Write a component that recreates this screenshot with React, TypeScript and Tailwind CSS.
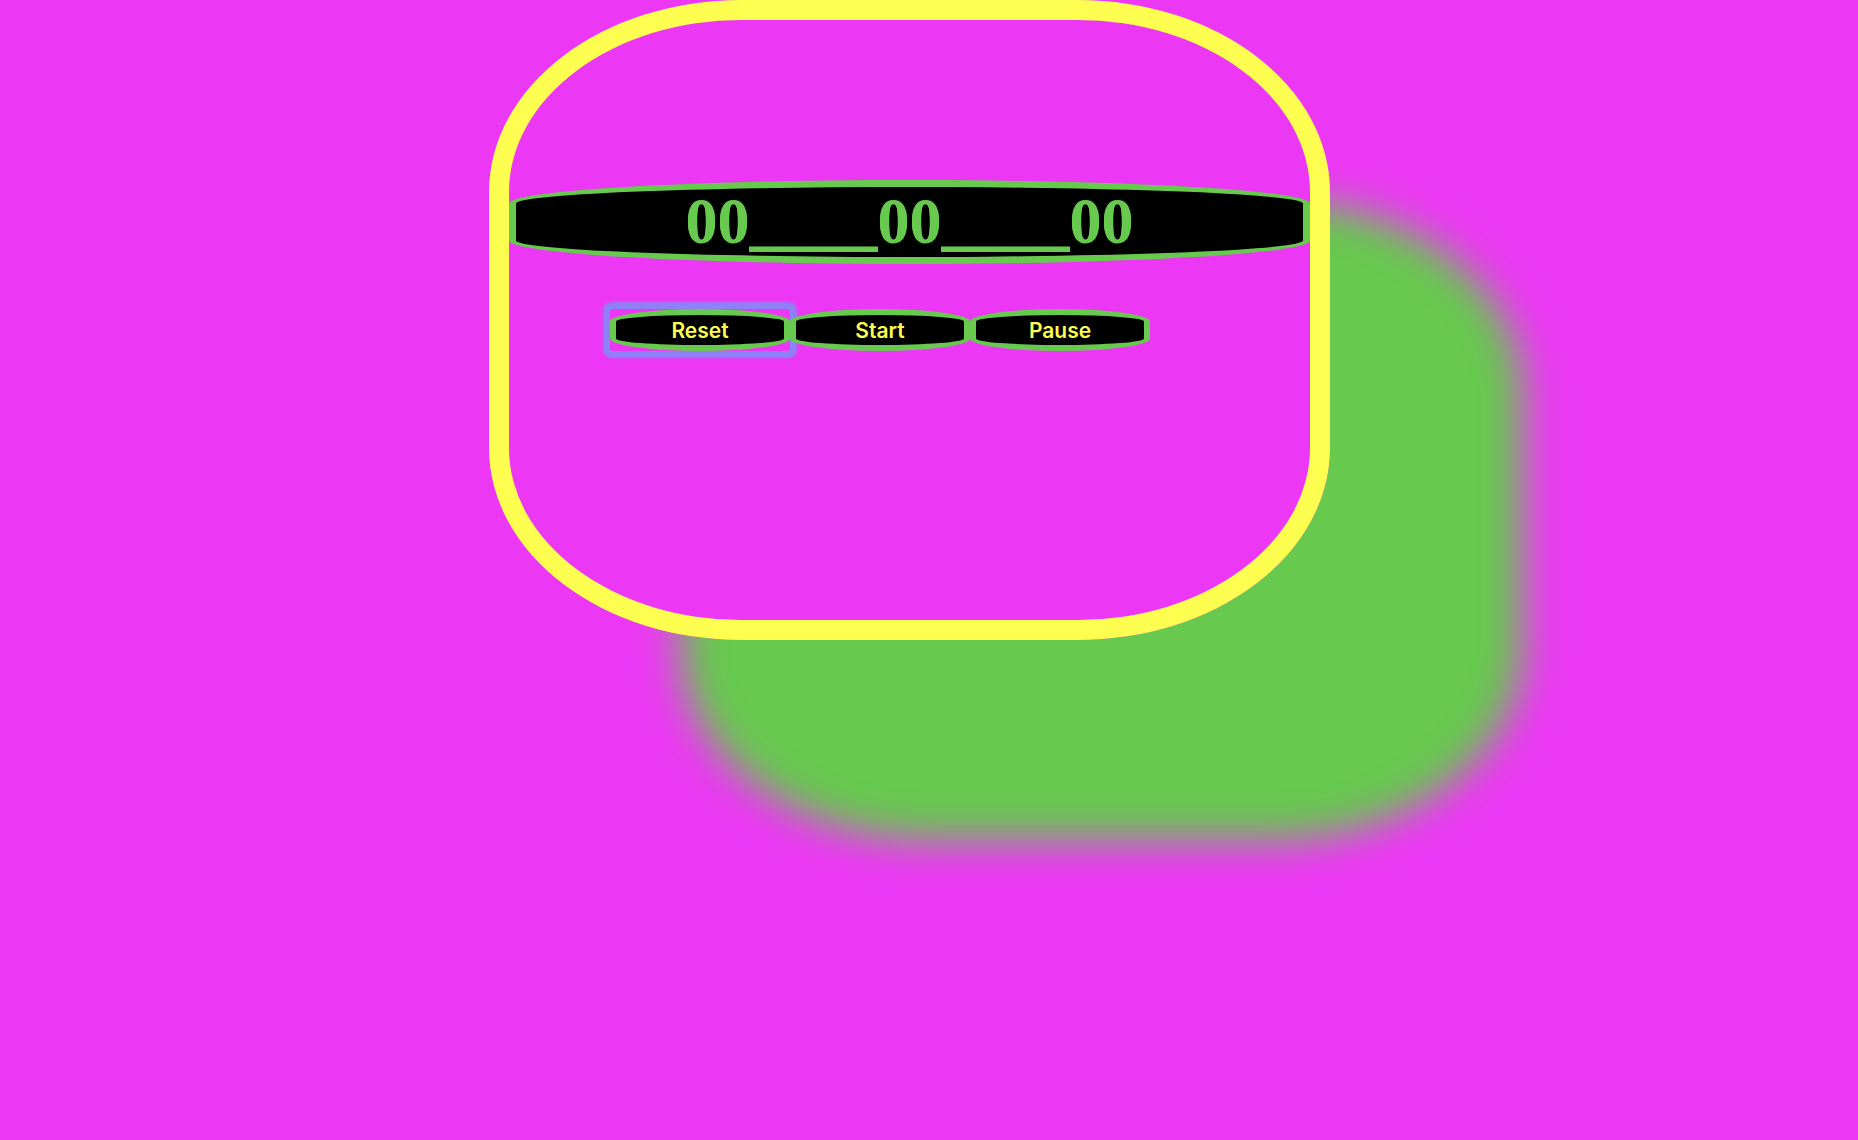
export default function App() {
  const buttons = ["Reset", "Start", "Pause"];

  return (
    <div className="min-h-screen w-full bg-[#ec38f4] overflow-hidden">
      <div className="ml-[489px] w-[841px] h-[640px] border-[20px] border-[#fefe51] rounded-[30%] shadow-[192px_200px_40px_0px_#67c94e]">
        <div className="mt-[160px] h-[84px] bg-black border-[7px] border-[#67c94e] rounded-[50%/28%] flex items-center justify-center">
          <span className="block text-[64px] leading-none font-bold text-[#67c94e] font-['Liberation_Serif',serif] [text-shadow:0_-1px_0_#67c94e]">
            00____00____00
          </span>
        </div>

        <div className="mt-[45px] ml-[101px] flex">
          {buttons.map((b, i) => (
            <span
              key={b}
              className={i === 0 ? "rounded-[3px] shadow-[0_0_2px_7px_#8f80f5]" : ""}
            >
              <button className="block w-[180px] h-[42px] bg-black border-[6px] border-[#67c94e] rounded-[50%/30%] text-[#fefe51] text-[21px] font-semibold leading-none font-['Inter',sans-serif]">
                {b}
              </button>
            </span>
          ))}
        </div>
      </div>
    </div>
  );
}
